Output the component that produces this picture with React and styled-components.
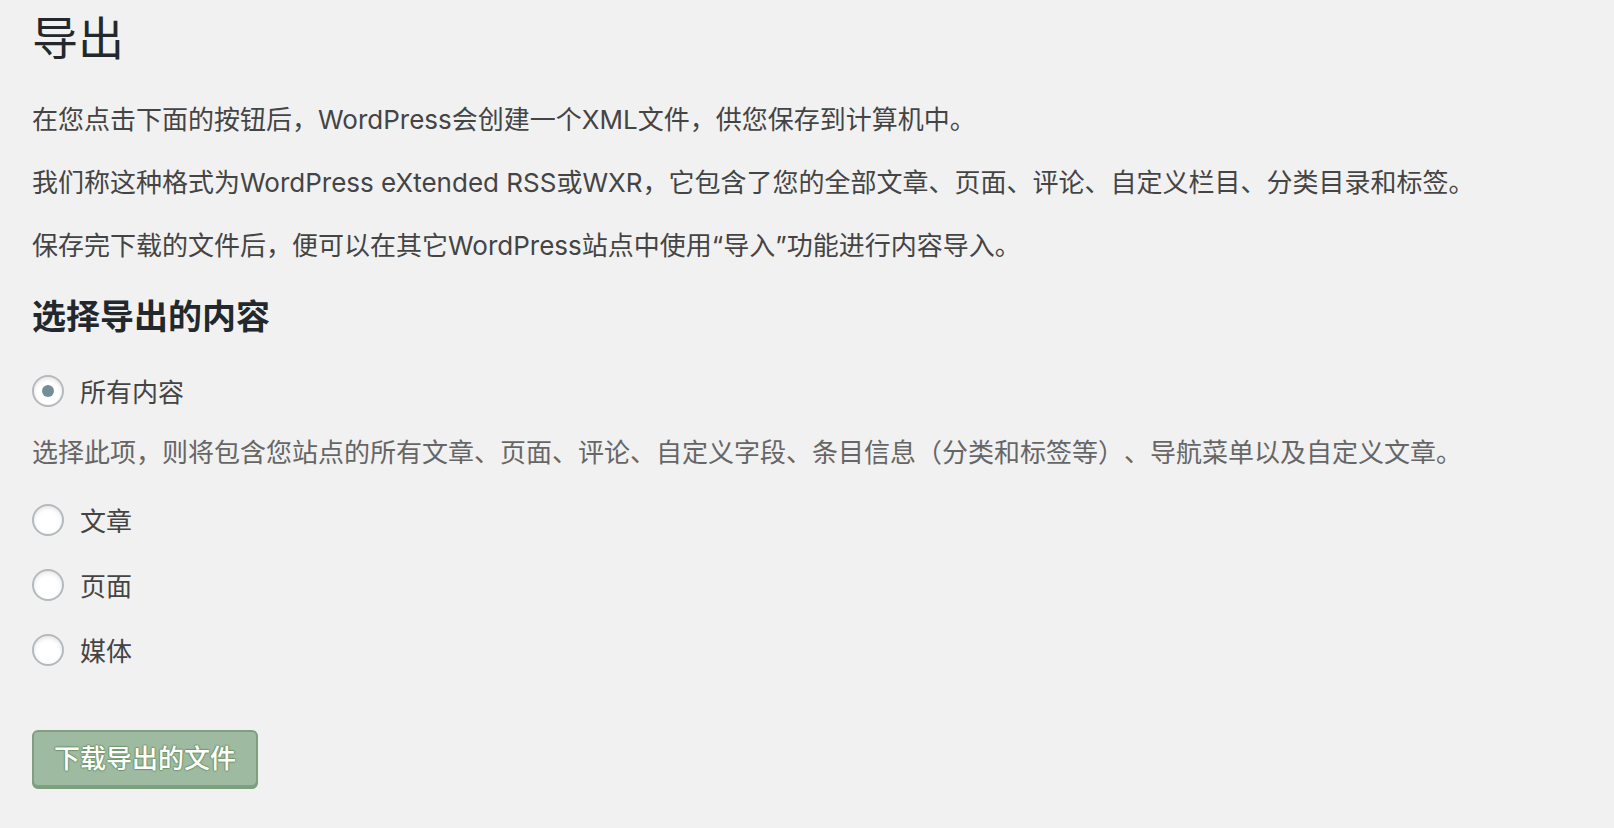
import React, { useState } from "react";
import styled, { createGlobalStyle } from "styled-components";

const GlobalStyle = createGlobalStyle`
  html, body {
    margin: 0;
    padding: 0;
    background: #f1f1f1;
  }
  body {
    font-family: "Inter", "Noto Sans CJK SC", sans-serif;
    color: #444;
    text-spacing-trim: space-all;
  }
`;

const Wrap = styled.div`
  padding: 8px 32px 40px 32px;
  min-height: 780px;
  box-sizing: border-box;
`;

const Title = styled.h1`
  margin: 0 0 33px 0;
  font-size: 46px;
  line-height: 60px;
  font-weight: 400;
  color: #23282d;
`;

const Para = styled.p`
  margin: 26px 0;
  font-size: 26px;
  line-height: 37px;
  color: ${p => (p.$muted ? "#666" : "#444")};
`;

const SubTitle = styled.h2`
  margin: 31px 0 33px 0;
  font-size: 34px;
  line-height: 44px;
  font-weight: 600;
  color: #23282d;
`;

const Option = styled.label`
  display: flex;
  align-items: center;
  gap: 16px;
  height: 37px;
  margin-top: ${p => p.$top || 0}px;
  font-size: 26px;
  color: #444;
  cursor: pointer;
`;

const Radio = styled.input.attrs({ type: "radio" })`
  appearance: none;
  -webkit-appearance: none;
  margin: 0;
  width: 32px;
  height: 32px;
  flex: none;
  box-sizing: border-box;
  border: 2px solid #b4b9be;
  border-radius: 50%;
  background: #fff;
  box-shadow: inset 0 2px 4px rgba(0, 0, 0, 0.1);
  display: flex;
  align-items: center;
  justify-content: center;
  cursor: pointer;

  &:checked::before {
    content: "";
    width: 12px;
    height: 12px;
    border-radius: 50%;
    background: #738e96;
  }
`;

const Description = styled(Para)`
  margin: 25px 0 30px 0;
`;

const Submit = styled.button`
  margin-top: 62px;
  height: 57px;
  padding: 0 20px;
  box-sizing: border-box;
  background: #9ebaa0;
  border: 2px solid #7e9f80;
  border-radius: 6px;
  box-shadow: 0 2px 0 #79a07b;
  color: #fff;
  font-family: "Inter", "Noto Sans CJK SC", sans-serif;
  font-size: 26px;
  font-weight: 500;
  line-height: 53px;
  text-shadow: 0 -1px 1px #6f986f, 1px 0 1px #6f986f, 0 1px 1px #6f986f,
    -1px 0 1px #6f986f;
  cursor: pointer;
`;

const options = [
  { id: "all", label: "所有内容" },
  { id: "posts", label: "文章" },
  { id: "pages", label: "页面" },
  { id: "attachment", label: "媒体" }
];

export default () => {
  const [content, setContent] = useState("all");
  return (
    <Wrap>
      <GlobalStyle />
      <Title>导出</Title>
      <Para>在您点击下面的按钮后，WordPress会创建一个XML文件，供您保存到计算机中。</Para>
      <Para>
        我们称这种格式为WordPress eXtended RSS或WXR，它包含了您的全部文章、页面、评论、自定义栏目、分类目录和标签。
      </Para>
      <Para>保存完下载的文件后，便可以在其它WordPress站点中使用“导入”功能进行内容导入。</Para>
      <SubTitle>选择导出的内容</SubTitle>
      <Option>
        <Radio
          name="content"
          checked={content === "all"}
          onChange={() => setContent("all")}
        />
        {options[0].label}
      </Option>
      <Description $muted>
        选择此项，则将包含您站点的所有文章、页面、评论、自定义字段、条目信息（分类和标签等）、导航菜单以及自定义文章。
      </Description>
      {options.slice(1).map((o, i) => (
        <Option key={o.id} $top={i === 0 ? 0 : 28}>
          <Radio
            name="content"
            checked={content === o.id}
            onChange={() => setContent(o.id)}
          />
          {o.label}
        </Option>
      ))}
      <Submit type="button">下载导出的文件</Submit>
    </Wrap>
  );
};
